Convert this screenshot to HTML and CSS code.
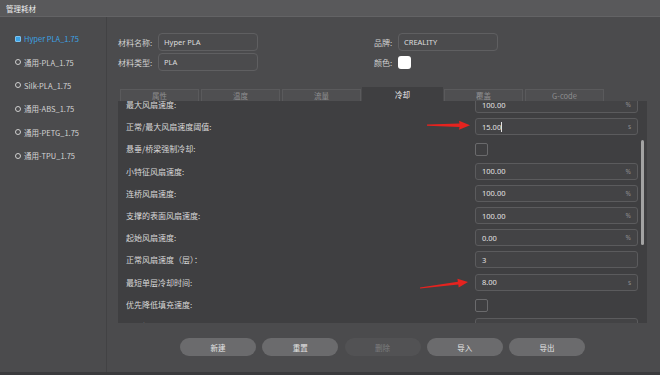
FILE: index.html
```html
<!DOCTYPE html>
<html>
	<head>
		<meta charset="utf-8" />
		<title>管理耗材</title>
		<link rel="stylesheet" href="styles.css">
	</head>
	<body>
		<div class="window">
			<div class="titlebar">管理耗材</div>
			<div class="body">
				<ul class="sidebar">
					<li class="item active"><span class="radio"></span>Hyper PLA_1.75</li>
					<li class="item"><span class="radio"></span>通用-PLA_1.75</li>
					<li class="item"><span class="radio"></span>Silk-PLA_1.75</li>
					<li class="item"><span class="radio"></span>通用-ABS_1.75</li>
					<li class="item"><span class="radio"></span>通用-PETG_1.75</li>
					<li class="item"><span class="radio"></span>通用-TPU_1.75</li>
				</ul>

				<div class="main">
					<div class="info">
						<div class="field"><label>材料名称:</label><div class="box">Hyper PLA</div></div>
						<div class="field"><label class="short">品牌:</label><div class="box">CREALITY</div></div>
						<div class="field"><label>材料类型:</label><div class="box">PLA</div></div>
						<div class="field"><label class="short">颜色:</label><div class="swatch"></div></div>
					</div>

					<div class="tabs">
						<div class="tab">属性</div>
						<div class="tab">温度</div>
						<div class="tab">流量</div>
						<div class="tab active">冷却</div>
						<div class="tab">覆盖</div>
						<div class="tab">G-code</div>
					</div>

					<div class="panel">
						<div class="rows">
							<div class="row"><span class="label">最大风扇速度:</span><div class="input">100.00<span class="unit">%</span></div></div>
							<div class="row"><span class="label">正常/最大风扇速度阈值:</span><div class="input">15.00<span class="caret"></span><span class="unit">s</span></div></div>
							<div class="row"><span class="label">悬垂/桥梁强制冷却:</span><div class="check"></div></div>
							<div class="row"><span class="label">小特征风扇速度:</span><div class="input">100.00<span class="unit">%</span></div></div>
							<div class="row"><span class="label">连桥风扇速度:</span><div class="input">100.00<span class="unit">%</span></div></div>
							<div class="row"><span class="label">支撑的表面风扇速度:</span><div class="input">100.00<span class="unit">%</span></div></div>
							<div class="row"><span class="label">起始风扇速度:</span><div class="input">0.00<span class="unit">%</span></div></div>
							<div class="row"><span class="label">正常风扇速度（层）：</span><div class="input">3</div></div>
							<div class="row"><span class="label">最短单层冷却时间:</span><div class="input">8.00<span class="unit">s</span></div></div>
							<div class="row"><span class="label">优先降低填充速度:</span><div class="check"></div></div>
							<div class="row"><span class="label">最小打印速度:</span><div class="input">10.00<span class="unit">mm/s</span></div></div>
						</div>
						<div class="scrollbar"></div>
					</div>

					<div class="actions">
						<button class="btn">新建</button>
						<button class="btn">重置</button>
						<button class="btn disabled">删除</button>
						<button class="btn">导入</button>
						<button class="btn">导出</button>
					</div>
				</div>
			</div>

			<!-- red annotation arrows -->
			<svg class="marks" width="660" height="375" viewBox="0 0 660 375">
				<polygon fill="#e5231f" points="427,124.4 459.5,123.6 459,120.8 470,125.3 459,129.8 459.5,127 427,125.8" />
				<polygon fill="#e5231f" points="419.9,287.4 457.9,281.7 457.4,278.7 468,282 458.7,287.6 458.3,284.6 420.1,288.6" />
			</svg>
		</div>
	</body>
</html>
```

FILE: styles.css
```css
*{
	padding: 0;
	margin: 0;
	box-sizing: border-box;
}
html,body{
	width: 100%;
	height: 100%;
	background-color: #4b4b4d;
}
body{
	font-family: "Noto Sans CJK SC", "Noto Sans", sans-serif;
	font-size: 8px;
	color: #d9d9d9;
}
.window{
	position: relative;
	width: 660px;
	height: 375px;
	display: flex;
	flex-direction: column;
	background-color: #4b4b4d;
	border-bottom: 3px solid #3b3b3d;
	overflow: hidden;
}
.titlebar{
	height: 17px;
	line-height: 17px;
	padding-left: 6px;
	font-size: 7.5px;
	color: #eeeeee;
	background-color: #59595b;
	border-bottom: 1px solid #636365;
}
.body{
	flex: 1;
	display: flex;
}

/* left list */
.sidebar{
	list-style: none;
	width: 107px;
	padding-top: 10px;
	border-right: 1px solid #424244;
}
.item{
	height: 23.4px;
	display: flex;
	align-items: center;
	padding-left: 15px;
	font-size: 7.5px;
	color: #d4d4d4;
	white-space: nowrap;
}
.radio{
	width: 6px;
	height: 6px;
	border: 1px solid #cfcfcf;
	border-radius: 50%;
	margin-right: 3px;
}
.item.active{
	color: #3ba3e6;
}
.item.active .radio{
	background-color: #3ba3e6;
	border-color: #7cc4f2;
	border-radius: 1px;
}

/* right side */
.main{
	flex: 1;
	display: flex;
	flex-direction: column;
	padding: 16px 13px 0 11px;
}
.info{
	display: grid;
	grid-template-columns: 256px 1fr;
	row-gap: 2px;
}
.field{
	display: flex;
	align-items: center;
	height: 18px;
}
.field label{
	width: 40px;
	color: #cfcfcf;
}
.field label.short{
	width: 24px;
}
.box{
	width: 100px;
	height: 18px;
	line-height: 16px;
	padding-left: 5px;
	border: 1px solid #5f5f61;
	border-radius: 4px;
	font-family: "Noto Sans", sans-serif;
	font-size: 7.5px;
	color: #dddddd;
}
.swatch{
	width: 13px;
	height: 13px;
	background-color: #ffffff;
	border-radius: 3px;
}

.tabs{
	display: flex;
	align-items: flex-end;
	gap: 2px;
	height: 14px;
	margin-top: 16px;
	padding-left: 2px;
}
.tab{
	width: 79px;
	height: 12px;
	line-height: 11px;
	text-align: center;
	font-size: 7.5px;
	color: #8e8e90;
	background-color: #4f4f51;
	border: 1px solid #5a5a5c;
	border-bottom: none;
}
.tab.active{
	width: 81px;
	margin: 0 -1px;
	height: 14px;
	line-height: 13px;
	color: #f2f2f2;
	background-color: #3f3f41;
	border-color: #3f3f41;
}

.panel{
	position: relative;
	height: 222px;
	background-color: #3f3f41;
	overflow: hidden;
}
.rows{
	margin-top: -7.5px;
}
.row{
	height: 22.2px;
	display: flex;
	align-items: center;
	padding: 0 9px 0 8px;
}
.label{
	flex: 1;
	color: #d8d8d8;
}
.input{
	width: 163px;
	height: 17px;
	display: flex;
	align-items: center;
	padding: 0 6px 0 6px;
	border: 1px solid #5b5b5d;
	border-radius: 3px;
	background-color: #434345;
	font-family: "Noto Sans", sans-serif;
	font-size: 7.5px;
	color: #e2e2e2;
}
.caret{
	width: 1px;
	height: 10px;
	background-color: #e2e2e2;
}
.unit{
	margin-left: auto;
	font-size: 6.5px;
	color: #8d8d8f;
}
.check{
	width: 163px;
	height: 11px;
}
.check::before{
	content: "";
	display: block;
	width: 11px;
	height: 11px;
	border: 1px solid #6a6a6c;
	border-radius: 2px;
}
.scrollbar{
	position: absolute;
	right: 3px;
	top: 39px;
	width: 3px;
	height: 105px;
	border-radius: 2px;
	background-color: #a3a3a3;
}

.actions{
	display: flex;
	justify-content: center;
	gap: 6.3px;
	margin-top: 15px;
}
.btn{
	width: 76px;
	height: 18px;
	border: none;
	border-radius: 9px;
	background-color: #6b6b6d;
	color: #e4e4e4;
	font-family: "Noto Sans CJK SC", sans-serif;
	font-size: 7.5px;
}
.btn.disabled{
	background-color: #525254;
	color: #7d7d7f;
}

.marks{
	position: absolute;
	left: 0;
	top: 0;
	pointer-events: none;
}
```
